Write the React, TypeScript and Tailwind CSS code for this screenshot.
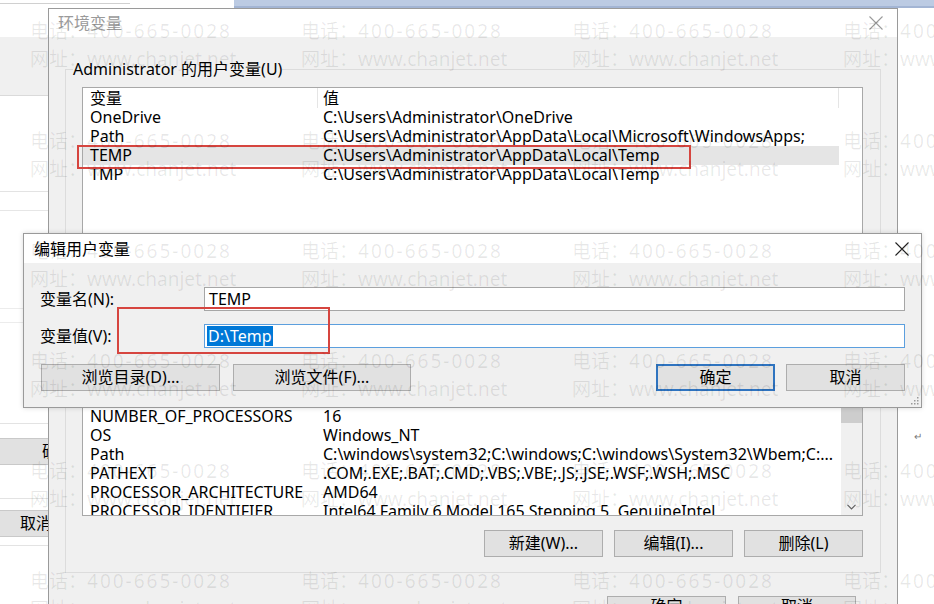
import React from "react";

type RowProps = { name: string; value: string; selected?: boolean };

function Row({ name, value, selected }: RowProps) {
  return (
    <div className={selected ? "flex h-[19px] w-[756px] leading-[19px] bg-[#e5e5e5]" : "flex h-[19px] w-[756px] leading-[19px]"}>
      <div className="w-[235px] shrink-0 whitespace-nowrap overflow-hidden pl-[7px]">{name}</div>
      <div className="w-[521px] shrink-0 whitespace-nowrap overflow-hidden pl-[5px]">{value}</div>
    </div>
  );
}

function Header() {
  return (
    <div className="flex h-[20px] w-[756px] leading-[20px]">
      <div className="w-[235px] shrink-0 pl-[7px] border-r border-[#e5e5e5]">变量</div>
      <div className="w-[521px] shrink-0 pl-[5px] border-r border-[#e5e5e5]">值</div>
    </div>
  );
}

function Btn({ children, className }: { children: React.ReactNode; className: string }) {
  return (
    <div className={"flex h-[27px] shrink-0 items-center justify-center bg-[#e1e1e1] border border-[#adadad] text-[16px] leading-[19px] " + className}>
      {children}
    </div>
  );
}

function CloseX({ color }: { color: string }) {
  return (
    <svg width="14" height="14" viewBox="0 0 14 14" className="shrink-0">
      <path d="M0.5 0.5 L13.5 13.5 M13.5 0.5 L0.5 13.5" stroke={color} strokeWidth="1.1" fill="none" />
    </svg>
  );
}

function LeftStrip() {
  return (
    <div className="w-[48px] shrink-0 flex flex-col overflow-hidden">
      <div className="h-[29px] bg-white" />
      <div className="h-[59px] bg-[#f0f0f0] border-b border-[#dadada]" />
      <div className="h-[96px] border-b border-[#e3e3e3]" />
      <div className="h-[19px] border-b border-[#e6e6e6]" />
      <div className="h-[98px] border-b border-[#ececec]" />
      <div className="h-[14px] border-b border-[#ececec]" />
      <div className="h-[101px] border-b border-[#e3e3e3]" />
      <div className="h-[14px]" />
      <div className="h-[27px] bg-[#e1e1e1] border-y border-[#c9c9c9] flex items-center pl-[42px] whitespace-nowrap text-[16px] leading-[19px]">确定</div>
      <div className="h-[34px] border-b border-[#e3e3e3]" />
      <div className="h-[11px]" />
      <div className="h-[27px] bg-[#e1e1e1] border-y border-[#c9c9c9] flex items-center pl-[20px] whitespace-nowrap text-[16px] leading-[19px]">取消</div>
      <div className="h-[9px] border-b border-[#e3e3e3]" />
    </div>
  );
}

function EnvWindow() {
  return (
    <div className="w-[850px] shrink-0 flex flex-col border border-[#9a9a9a] bg-[#f0f0f0]">
      <div className="h-[28px] bg-white flex items-center justify-between pl-[9px] pr-[14px]">
        <span className="text-[#9a9a9a] text-[16px] leading-[20px]">环境变量</span>
        <CloseX color="#9a9a9a" />
      </div>
      <div className="flex flex-col px-[16px] pb-[30px]">
        <fieldset className="mt-[22px] border border-[#dcdcdc] pb-[14px]">
          <legend className="ml-[7px] text-[16px] leading-[20px]">Administrator 的用户变量(U)</legend>
          <div className="mt-[8px] ml-[16px] w-[781px] h-[164px] border border-[#a8a8a8] bg-white overflow-hidden">
            <Header />
            <Row name="OneDrive" value={"C:\\Users\\Administrator\\OneDrive"} />
            <Row name="Path" value={"C:\\Users\\Administrator\\AppData\\Local\\Microsoft\\WindowsApps;"} />
            <Row name="TEMP" value={"C:\\Users\\Administrator\\AppData\\Local\\Temp"} selected />
            <Row name="TMP" value={"C:\\Users\\Administrator\\AppData\\Local\\Temp"} />
          </div>
          <div className="mt-[12px] ml-[16px] w-[781px] flex justify-end gap-[11px]">
            <Btn className="w-[119px]">新建(N)...</Btn>
            <Btn className="w-[119px]">编辑(E)...</Btn>
            <Btn className="w-[119px]">删除(D)</Btn>
          </div>
        </fieldset>
        <fieldset className="mt-[15px] border border-[#dcdcdc] pb-[15px]">
          <legend className="ml-[7px] text-[16px] leading-[20px]">系统变量(S)</legend>
          <div className="mt-[8px] ml-[16px] w-[781px] h-[168px] border border-[#a8a8a8] bg-white overflow-hidden flex">
            <div className="flex-1 overflow-hidden">
              <Header />
              <Row name="ComSpec" value={"C:\\windows\\system32\\cmd.exe"} />
              <Row name="DriverData" value={"C:\\Windows\\System32\\Drivers\\DriverData"} />
              <Row name="NUMBER_OF_PROCESSORS" value="16" />
              <Row name="OS" value="Windows_NT" />
              <Row name="Path" value={"C:\\windows\\system32;C:\\windows;C:\\windows\\System32\\Wbem;C:..."} />
              <Row name="PATHEXT" value=".COM;.EXE;.BAT;.CMD;.VBS;.VBE;.JS;.JSE;.WSF;.WSH;.MSC" />
              <Row name="PROCESSOR_ARCHITECTURE" value="AMD64" />
              <Row name="PROCESSOR_IDENTIFIER" value="Intel64 Family 6 Model 165 Stepping 5, GenuineIntel" />
            </div>
            <div className="w-[21px] shrink-0 bg-[#f0f0f0] flex flex-col">
              <div className="h-[17px]" />
              <div className="h-[57px] bg-[#cdcdcd]" />
              <div className="flex-1" />
              <div className="h-[17px] flex items-center justify-center">
                <svg width="9" height="6" viewBox="0 0 9 6">
                  <path d="M0.5 0.8 L4.5 4.8 L8.5 0.8" stroke="#606060" strokeWidth="1.2" fill="none" />
                </svg>
              </div>
            </div>
          </div>
          <div className="mt-[14px] ml-[16px] w-[781px] flex justify-end gap-[11px]">
            <Btn className="w-[119px]">新建(W)...</Btn>
            <Btn className="w-[119px]">编辑(I)...</Btn>
            <Btn className="w-[119px]">删除(L)</Btn>
          </div>
        </fieldset>
        <div className="mt-[23px] flex justify-end gap-[12px] pr-[25px]">
          <div className="w-[119px] h-[27px] bg-[#e1e1e1] border border-[#adadad] flex justify-center text-[16px] leading-[19px]">确定</div>
          <div className="w-[118px] h-[27px] bg-[#e1e1e1] border border-[#adadad] flex justify-center text-[16px] leading-[19px]">取消</div>
        </div>
      </div>
    </div>
  );
}

function EditDialog() {
  return (
    <div className="absolute left-[23px] top-[233px] w-[899px] h-[175px] bg-[#f0f0f0] border border-[#9a9a9a] shadow-[0_0_5px_rgba(0,0,0,0.15)] flex flex-col">
      <div className="h-[29px] bg-white flex items-center justify-between pl-[10px] pr-[12px]">
        <span className="text-[16px] leading-[20px]">编辑用户变量</span>
        <CloseX color="#222222" />
      </div>
      <div className="flex flex-col px-[16px]">
        <div className="mt-[24px] flex items-center">
          <div className="w-[164px] shrink-0 text-[16px] leading-[20px]">变量名(N):</div>
          <div className="flex-1 h-[24px] bg-white border border-[#a6a6a6] flex items-center pl-[4px] text-[16px] leading-[20px]">TEMP</div>
        </div>
        <div className="mt-[13px] flex items-center">
          <div className="w-[164px] shrink-0 text-[16px] leading-[20px]">变量值(V):</div>
          <div className="flex-1 h-[24px] bg-white border border-[#5c9fde] flex items-center pl-[2px] text-[16px]">
            <span className="bg-[#0078d7] text-white px-[1px] leading-[20px]">{"D:\\Temp"}</span>
          </div>
        </div>
        <div className="mt-[16px] flex">
          <Btn className="w-[179px] ml-[1px]">浏览目录(D)...</Btn>
          <Btn className="w-[178px] ml-[13px]">浏览文件(F)...</Btn>
          <div className="flex-1" />
          <div className="w-[119px] h-[27px] shrink-0 flex items-center justify-center bg-[#e1e1e1] border-2 border-[#2f74c0] text-[16px] leading-[19px]">确定</div>
          <Btn className="w-[119px] ml-[11px]">取消</Btn>
        </div>
      </div>
      <svg width="10" height="10" viewBox="0 0 10 10" className="absolute right-[2px] bottom-[2px]">
        <rect x="8" y="2" width="1.5" height="1.5" fill="#9a9a9a" />
        <rect x="5" y="5" width="1.5" height="1.5" fill="#9a9a9a" />
        <rect x="8" y="5" width="1.5" height="1.5" fill="#9a9a9a" />
        <rect x="2" y="8" width="1.5" height="1.5" fill="#9a9a9a" />
        <rect x="5" y="8" width="1.5" height="1.5" fill="#9a9a9a" />
        <rect x="8" y="8" width="1.5" height="1.5" fill="#9a9a9a" />
      </svg>
    </div>
  );
}

function Watermark() {
  const cells = Array.from({ length: 24 });
  return (
    <div className="absolute inset-0 pointer-events-none pl-[30px] pt-[17px] grid grid-cols-[repeat(4,271px)] auto-rows-[110px]">
      {cells.map((_, i) => (
        <div key={i} className="flex flex-col text-[19px] leading-[28px] text-black/[0.09] whitespace-nowrap">
          <div>
            电话：<span className="tracking-[2px]">400-665-0028</span>
          </div>
          <div>网址：www.chanjet.net</div>
        </div>
      ))}
    </div>
  );
}

export default function App() {
  return (
    <div className="relative w-[934px] h-[604px] overflow-hidden bg-white text-black text-[16px] font-['Noto_Sans','Noto_Sans_CJK_SC',sans-serif]">
      <div className="flex h-[8px]">
        <div className="w-[130px] h-[4px] border-b border-[#d0d0d0]" />
        <div className="w-[104px]" />
        <div className="flex-1 bg-[#bccbe3] border-b-2 border-[#a3b5d4]" />
      </div>
      <div className="flex">
        <LeftStrip />
        <EnvWindow />
        <div className="w-[36px] shrink-0 flex flex-col">
          <div className="mt-[422px] pl-[16px] text-[10px] leading-[12px] text-[#777777]">↵</div>
        </div>
      </div>
      <EditDialog />
      <div className="absolute left-[77px] top-[145px] w-[614px] h-[24px] border-2 border-[#d6453f]" />
      <div className="absolute left-[117px] top-[307px] w-[213px] h-[47px] border-2 border-[#d6453f]" />
      <Watermark />
    </div>
  );
}
